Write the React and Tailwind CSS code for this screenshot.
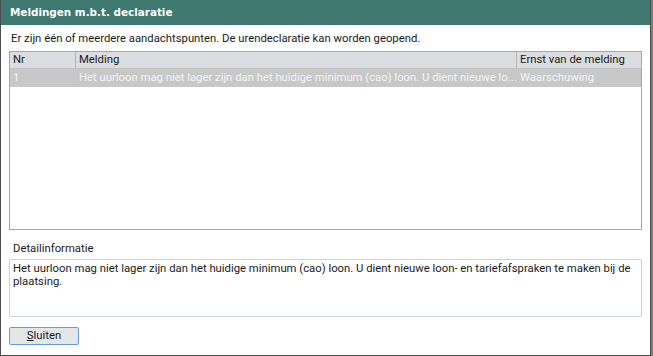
import React from 'react';

const rows = [
  {
    nr: '1',
    melding: 'Het uurloon mag niet lager zijn dan het huidige minimum (cao) loon. U dient nieuwe lo...',
    ernst: 'Waarschuwing',
  },
];

const App = () => {
  return (
    <div className="w-[653px] h-[356px] bg-[#7d7d7d] flex" style={{ fontFamily: 'Roboto, "Liberation Sans", sans-serif' }}>
      <div className="w-[651px] h-[356px] bg-white border-l border-r border-b border-[#4d4d4d] flex flex-col">
        {/* Title bar */}
        <div className="h-[25px] bg-[#3f786f] flex items-center pl-[9px] shrink-0">
          <span
            className="text-white font-bold text-[10.4px]"
            style={{ fontFamily: '"DejaVu Sans", Verdana, sans-serif' }}
          >
            Meldingen m.b.t. declaratie
          </span>
        </div>

        <div className="flex flex-col px-[8px] text-[11.3px] text-[#1a1a1a]">
          <div className="h-[26px] pt-[7px] pl-[2px] leading-[14px]">
            Er zijn één of meerdere aandachtspunten. De urendeclaratie kan worden geopend.
          </div>

          {/* Table */}
          <div className="h-[179px] border border-[#a6a6a6] flex flex-col">
            <div className="h-[17px] bg-[#dcdde0] border-b border-[#c4c4c4] flex leading-[16px]">
              <div className="w-[66px] pl-[3px] border-r border-[#b4b4b4]">Nr</div>
              <div className="w-[441px] pl-[3px] border-r border-[#b4b4b4]">Melding</div>
              <div className="flex-1 pl-[3px]">Ernst van de melding</div>
            </div>
            {rows.map((r) => (
              <div key={r.nr} className="h-[18px] bg-[#c8c8c8] flex leading-[18px] text-[#f4f4f4]">
                <div className="w-[66px] pl-[3px]">{r.nr}</div>
                <div className="w-[441px] pl-[3px] whitespace-nowrap overflow-hidden">{r.melding}</div>
                <div className="flex-1 pl-[3px]">{r.ernst}</div>
              </div>
            ))}
          </div>

          <div className="pt-[11px] pl-[4px] h-[29px] leading-[16px]">Detailinformatie</div>

          <div className="h-[58px] border border-[#c9d1da] rounded-[2px] px-[3px] pt-[2px] leading-[13px]">
            Het uurloon mag niet lager zijn dan het huidige minimum (cao) loon. U dient nieuwe loon- en tariefafspraken te maken bij de plaatsing.
          </div>

          <div className="pt-[10px]">
            <button className="w-[70px] h-[18px] bg-[#e4e6e8] border border-[#5f9ee6] rounded-[2px] text-[11.3px] leading-[14px] text-[#1a1a1a]">
              <span className="underline">S</span>luiten
            </button>
          </div>
        </div>
      </div>
    </div>
  );
};

export default App;
